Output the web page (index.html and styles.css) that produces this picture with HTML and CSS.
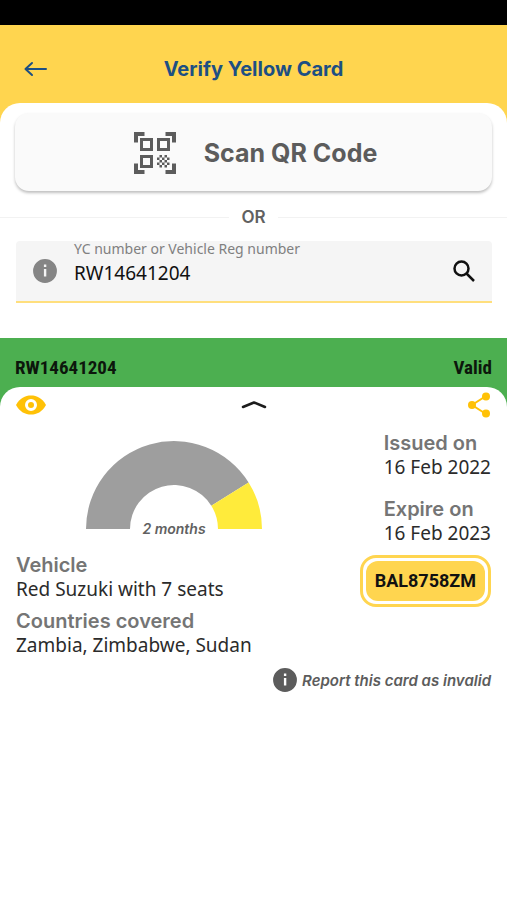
FILE: index.html
```html
<!DOCTYPE html>
<html lang="en">
<head>
<meta charset="utf-8">
<meta name="viewport" content="width=device-width, initial-scale=1">
<title>Verify Yellow Card</title>
<link rel="stylesheet" href="styles.css">
</head>
<body>
<div class="status-bar"></div>
<header class="app-bar">
  <button class="icon-button" type="button" aria-label="Back">
    <svg width="24" height="16" viewBox="0 0 24 16" fill="none" stroke="currentColor" stroke-width="2" stroke-linecap="round" stroke-linejoin="round"><path d="M22 8H1.500M8 2L1.500 8l6.500 6"/></svg>
  </button>
  <h1 class="title">Verify Yellow Card</h1>
</header>
<main>
  <section class="search-area">
    <div class="sheet search-sheet">
      <button class="scan-button" type="button">
        <svg width="42" height="42" viewBox="0 0 42 42" fill="currentColor">
          <path d="M0 0h10.500v4H4v6.500H0zM31.500 0H42v10.500h-4V4h-6.500zM0 31.500h4V38h6.500v4H0zM38 31.500h4V42H31.500v-4H38z"/>
          <path fill-rule="evenodd" d="M6 6h13v13H6zm3 3v7h7V9zM23 6h13v13H23zm3 3v7h7V9zM6 23h13v13H6zm3 3v7h7v-7z"/>
          <path d="M25.500 23H28v2.500h-2.500zM30.500 23H33v2.500h-2.500zM23 25.500h2.500V28H23zM28 25.500h2.500V28H28zM33 25.500h2.500V28H33zM25.500 28H28v2.500h-2.500zM30.500 28H33v2.500h-2.500zM23 30.500h2.500V33H23zM28 30.500h2.500V33H28zM33 30.500h2.500V33H33zM25.500 33H28v2.500h-2.500zM30.500 33H33v2.500h-2.500z"/>
        </svg>
        <span>Scan QR Code</span>
      </button>
      <div class="divider"><span>OR</span></div>
      <div class="field">
        <svg class="field-info" width="26" height="26" viewBox="0 0 24 24" fill="currentColor"><path fill-rule="evenodd" d="M12 1a11 11 0 1 0 0 22a11 11 0 0 0 0-22zm-1 5h2.200v2.200H11zm0 4.200h2.200V17H11z"/></svg>
        <div class="field-text">
          <label for="number">YC number or Vehicle Reg number</label>
          <input id="number" type="text" value="RW14641204">
        </div>
        <button class="icon-button" type="button" aria-label="Search">
          <svg width="24" height="24" viewBox="0 0 24 24" fill="none" stroke="currentColor" stroke-width="2.500"><circle cx="9.500" cy="9.500" r="7"/><path d="M14.500 14.500l7.500 7.500"/></svg>
        </button>
      </div>
    </div>
  </section>
  <section class="result">
    <div class="result-bar"><span>RW14641204</span><span>Valid</span></div>
    <div class="sheet result-sheet">
      <div class="actions">
        <button class="icon-button amber" type="button" aria-label="View card">
          <svg width="30" height="20" viewBox="0 0 30 20"><path fill="currentColor" d="M0 10C4 3 9 .5 15 .5s11 2.500 15 9.500c-4 7-9 9.500-15 9.500S4 17 0 10z"/><circle cx="15" cy="10" r="4.500" fill="none" stroke="#fff" stroke-width="3"/></svg>
        </button>
        <button class="icon-button" type="button" aria-label="Collapse">
          <svg width="26" height="10" viewBox="0 0 26 10" fill="none" stroke="#1c1c1c" stroke-width="2.500" stroke-linecap="round" stroke-linejoin="round"><path d="M2 7L13 2.500L24 7"/></svg>
        </button>
        <button class="icon-button amber" type="button" aria-label="Share">
          <svg width="24" height="26" viewBox="0 0 24 26" fill="currentColor"><path d="M19 4L5 13l14 9" fill="none" stroke="currentColor" stroke-width="2"/><circle cx="19" cy="4.500" r="4"/><circle cx="5" cy="13" r="4"/><circle cx="19" cy="21.500" r="4"/></svg>
        </button>
      </div>
      <div class="details">
        <div class="overview">
          <figure class="gauge">
            <svg width="176" height="88" viewBox="0 0 176 88"><path fill="#9e9e9e" d="M0 88A88 88 0 0 1 162.600 41.400L125.300 64.700A44 44 0 0 0 44 88z"/><path fill="#ffeb3b" d="M162.600 41.400A88 88 0 0 1 176 88H132A44 44 0 0 0 125.300 64.700z"/></svg>
            <figcaption>2 months</figcaption>
          </figure>
          <dl class="facts">
            <dt>Vehicle</dt><dd>Red Suzuki with 7 seats</dd>
            <dt>Countries covered</dt><dd>Zambia, Zimbabwe, Sudan</dd>
          </dl>
        </div>
        <div class="validity">
          <dl class="facts dates">
            <dt>Issued on</dt><dd>16 Feb 2022</dd>
            <dt>Expire on</dt><dd>16 Feb 2023</dd>
          </dl>
          <div class="plate"><span>BAL8758ZM</span></div>
        </div>
      </div>
      <a class="report" href="#">
        <svg width="26" height="26" viewBox="0 0 24 24" fill="currentColor"><path fill-rule="evenodd" d="M12 1a11 11 0 1 0 0 22a11 11 0 0 0 0-22zm-1 5h2.200v2.200H11zm0 4.200h2.200V17H11z"/></svg>
        <span>Report this card as invalid</span>
      </a>
    </div>
  </section>
</main>
</body>
</html>
```
FILE: styles.css
```css
* { box-sizing: border-box; }
body, h1, dl, dd, figure { margin: 0; }
body { background: #fff; color: #2b2b2b; font-family: "Noto Sans", sans-serif; }
button { border: 0; padding: 0; background: none; color: inherit; cursor: pointer; }
svg { display: block; flex: none; }

.status-bar { height: 25px; background: #000; }
.app-bar {
  display: grid;
  grid-template-columns: 24px 1fr 24px;
  align-items: center;
  height: 78px;
  padding: 10px 24px 0;
  background: #ffd54f;
  color: #1d4f83;
}
.title, .scan-button, .divider, .facts dt, .gauge figcaption, .report {
  font-family: Inter, sans-serif;
}
.title { font-size: 20px; line-height: 24px; font-weight: 700; text-align: center; }

.sheet { background: #fff; border-radius: 20px 20px 0 0; }
.search-area { background: #ffd54f; }
.search-sheet { padding-top: 10px; padding-bottom: 35px; }
.scan-button {
  display: flex;
  align-items: center;
  justify-content: center;
  gap: 28px;
  width: calc(100% - 30px);
  height: 78px;
  margin: 0 15px;
  padding: 2px 0 0 4px;
  border-radius: 14px;
  background: #fafafa;
  box-shadow: 0 2px 3px rgba(0, 0, 0, 0.25);
  color: #5c5c5c;
  font-size: 25px;
  font-weight: 700;
}
.divider {
  display: flex;
  align-items: center;
  gap: 12px;
  height: 50px;
  padding-top: 2px;
  color: #616161;
  font-size: 17px;
  font-weight: 600;
}
.divider::before, .divider::after { content: ""; flex: 1; height: 1px; background: #f2f2f2; }
.field {
  display: flex;
  align-items: center;
  height: 62px;
  margin: 0 15px 0 16px;
  padding: 0 16px;
  border-bottom: 2px solid #ffdf7d;
  border-radius: 4px 4px 0 0;
  background: #f5f5f5;
}
.field-info { color: #858585; }
.field-text { flex: 1; align-self: stretch; padding-left: 16px; }
.field label { display: block; color: #808080; font-size: 14px; line-height: 16px; }
.field input {
  display: block;
  width: 100%;
  height: 32px;
  padding: 0;
  border: 0;
  outline: 0;
  background: none;
  color: #111;
  font: 19px "Noto Sans", sans-serif;
}
.field .icon-button { color: #111; }

.result { background: #4caf50; }
.result-bar {
  display: flex;
  justify-content: space-between;
  align-items: flex-end;
  height: 49px;
  padding: 0 15px 6px;
  color: #0c160c;
  font: 700 19px/26px "Liberation Sans Narrow", "Roboto Condensed", "Liberation Sans", sans-serif;
}
.result-sheet { padding: 1px 16px 0; }
.actions {
  display: grid;
  grid-template-columns: 30px 1fr 30px;
  align-items: center;
  justify-items: center;
  height: 33px;
}
.actions button:last-child { justify-self: end; }
.amber { color: #ffc107; }
.details { display: flex; justify-content: space-between; }
.overview { padding-top: 20px; }
.gauge { display: flex; flex-direction: column; align-items: center; margin-left: 70px; width: 176px; }
.gauge figcaption {
  margin-top: -10px;
  color: #616161;
  font-size: 14px;
  line-height: 20px;
  font-style: italic;
  font-weight: 600;
}
.facts dt { color: #757575; font-size: 20px; line-height: 24px; font-weight: 600; }
.facts dd { font-size: 19px; line-height: 24px; }
.overview .facts { padding-top: 14px; }
.overview dt + dd + dt { margin-top: 8px; }
.validity { display: flex; flex-direction: column; align-items: flex-end; padding-top: 10px; }
.dates dt + dd + dt { margin-top: 18px; }
.plate {
  margin-top: 10px;
  padding: 3px;
  border: 3px solid #ffd54f;
  border-radius: 16px;
}
.plate span {
  display: block;
  padding: 0 9px;
  border-radius: 12px;
  background: #ffd54f;
  color: #111;
  font: 700 18px/40px Roboto, sans-serif;
}
.report {
  display: flex;
  align-items: center;
  justify-content: flex-end;
  gap: 4px;
  margin-top: 10px;
  color: #5c5c5c;
  font-size: 15px;
  font-style: italic;
  font-weight: 600;
  text-decoration: none;
}
```
